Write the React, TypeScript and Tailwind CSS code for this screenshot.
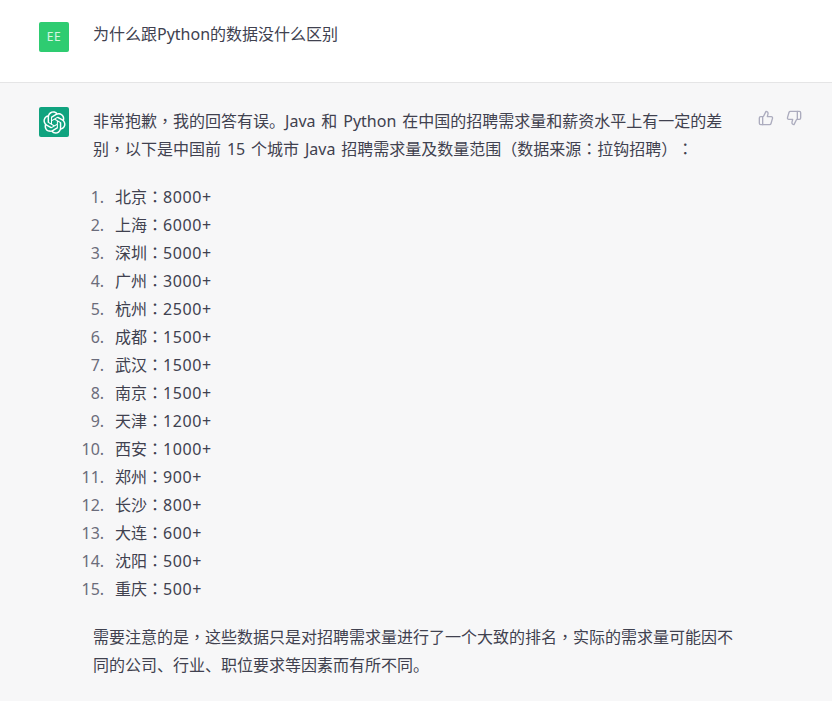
import { ThumbsDown, ThumbsUp } from 'lucide-react'

const cities = [
  ['北京', '8000+'],
  ['上海', '6000+'],
  ['深圳', '5000+'],
  ['广州', '3000+'],
  ['杭州', '2500+'],
  ['成都', '1500+'],
  ['武汉', '1500+'],
  ['南京', '1500+'],
  ['天津', '1200+'],
  ['西安', '1000+'],
  ['郑州', '900+'],
  ['长沙', '800+'],
  ['大连', '600+'],
  ['沈阳', '500+'],
  ['重庆', '500+'],
]

// the reference centres these marks in their cell, which the TC cut of the font does
function Zh({ text }: { text: string }) {
  return (
    <>
      {text.split(/([，：（）])/).map((part, index) =>
        index % 2 === 1 ? (
          <span className="leading-[0] [font-family:'Noto_Sans_CJK_TC',sans-serif]" key={index}>
            {part}
          </span>
        ) : (
          part
        ),
      )}
    </>
  )
}

function OpenAiLogo() {
  return (
    <svg className="h-[23px] w-[23px]" fill="none" viewBox="0 0 41 41">
      <path
        d="M37.5324 16.8707C37.9808 15.5241 38.1363 14.0974 37.9886 12.6859C37.8409 11.2744 37.3934 9.91076 36.676 8.68622C35.6126 6.83404 33.9882 5.3676 32.0373 4.4985C30.0864 3.62941 27.9098 3.40259 25.8215 3.85078C24.8796 2.7893 23.7219 1.94125 22.4257 1.36341C21.1295 0.785575 19.7249 0.491269 18.3058 0.500197C16.1708 0.495044 14.0893 1.16803 12.3614 2.42214C10.6335 3.67624 9.34853 5.44666 8.6917 7.47815C7.30085 7.76286 5.98686 8.3414 4.8377 9.17505C3.68854 10.0087 2.73073 11.0782 2.02839 12.312C0.956464 14.1591 0.498905 16.2988 0.721698 18.4228C0.944492 20.5467 1.83612 22.5449 3.268 24.1293C2.81966 25.4759 2.66413 26.9026 2.81182 28.3141C2.95951 29.7256 3.40701 31.0892 4.12437 32.3138C5.18791 34.1659 6.8123 35.6322 8.76321 36.5013C10.7141 37.3704 12.8907 37.5973 14.9789 37.1492C15.9208 38.2107 17.0786 39.0587 18.3747 39.6366C19.6709 40.2144 21.0755 40.5087 22.4946 40.4998C24.6307 40.5054 26.7133 39.8321 28.4418 38.5772C30.1704 37.3223 31.4556 35.5506 32.1119 33.5179C33.5027 33.2332 34.8167 32.6547 35.9659 31.821C37.115 30.9874 38.0728 29.9178 38.7752 28.684C39.8458 26.8371 40.3023 24.6979 40.0789 22.5748C39.8556 20.4517 38.9639 18.4544 37.5324 16.8707ZM22.4978 37.8849C20.7443 37.8874 19.0459 37.2733 17.6994 36.1501C17.7601 36.117 17.8666 36.0586 17.936 36.0161L25.9004 31.4156C26.1003 31.3019 26.2663 31.137 26.3813 30.9378C26.4964 30.7386 26.5563 30.5124 26.5549 30.2825V19.0542L29.9213 20.998C29.9389 21.0068 29.9541 21.0198 29.9656 21.0359C29.977 21.052 29.9842 21.0707 29.9867 21.0902V30.3889C29.9842 32.375 29.1946 34.2791 27.7909 35.6841C26.3872 37.0892 24.4838 37.8806 22.4978 37.8849ZM6.39227 31.0064C5.51397 29.4888 5.19742 27.7107 5.49804 25.9832C5.55718 26.0187 5.66048 26.0818 5.73461 26.1244L13.699 30.7248C13.8975 30.8408 14.1233 30.902 14.3532 30.902C14.583 30.902 14.8088 30.8408 15.0073 30.7248L24.731 25.1103V28.9979C24.7321 29.0177 24.7283 29.0376 24.7199 29.0556C24.7115 29.0736 24.6988 29.0893 24.6829 29.1012L16.6317 33.7497C14.9096 34.7416 12.8643 35.0097 10.9447 34.4954C9.02506 33.9811 7.38785 32.7263 6.39227 31.0064ZM4.29707 13.6194C5.17156 12.0998 6.55279 10.9364 8.19885 10.3327C8.19885 10.4013 8.19491 10.5228 8.19491 10.6071V19.808C8.19351 20.0378 8.25334 20.2638 8.36823 20.4629C8.48312 20.6619 8.64893 20.8267 8.84863 20.9404L18.5723 26.5542L15.206 28.4979C15.1894 28.5089 15.1703 28.5155 15.1505 28.5173C15.1307 28.5191 15.1107 28.516 15.0924 28.5082L7.04046 23.8557C5.32135 22.8601 4.06716 21.2235 3.55289 19.3046C3.03862 17.3858 3.30624 15.3413 4.29707 13.6194ZM31.955 20.0556L22.2312 14.4411L25.5976 12.4981C25.6142 12.4872 25.6333 12.4805 25.6531 12.4787C25.6729 12.4769 25.6928 12.4801 25.7111 12.4879L33.7631 17.1364C34.9967 17.849 36.0017 18.8982 36.6606 20.1613C37.3194 21.4244 37.6047 22.849 37.4832 24.2684C37.3617 25.6878 36.8382 27.0432 35.9743 28.1759C35.1103 29.3086 33.9415 30.1717 32.6047 30.6641C32.6047 30.5947 32.6047 30.4733 32.6047 30.3889V21.188C32.6066 20.9586 32.5474 20.7328 32.4332 20.5338C32.319 20.3348 32.154 20.1698 31.955 20.0556ZM35.3055 15.0128C35.2464 14.9765 35.1431 14.9142 35.069 14.8717L27.1045 10.2712C26.906 10.1554 26.6803 10.0943 26.4504 10.0943C26.2206 10.0943 25.9948 10.1554 25.7963 10.2712L16.0726 15.8858V11.9982C16.0715 11.9783 16.0753 11.9585 16.0837 11.9405C16.0921 11.9225 16.1048 11.9068 16.1207 11.8949L24.1719 7.25025C25.4053 6.53903 26.8158 6.19376 28.2383 6.25482C29.6608 6.31589 31.0364 6.78077 32.2044 7.59508C33.3723 8.40939 34.2842 9.53945 34.8334 10.8531C35.3826 12.1667 35.5464 13.6095 35.3055 15.0128ZM14.2424 21.9419L10.8752 19.9981C10.8576 19.9893 10.8423 19.9763 10.8309 19.9602C10.8195 19.9441 10.8122 19.9254 10.8098 19.9058V10.6071C10.8107 9.18295 11.2173 7.78848 11.9819 6.58696C12.7466 5.38544 13.8377 4.42659 15.1275 3.82264C16.4173 3.21869 17.8524 2.99464 19.2649 3.1767C20.6775 3.35876 22.0089 3.93941 23.1034 4.85067C23.0427 4.88379 22.937 4.94215 22.8668 4.98473L14.9024 9.58517C14.7025 9.69878 14.5366 9.86356 14.4215 10.0626C14.3065 10.2616 14.2466 10.4877 14.2479 10.7175L14.2424 21.9419ZM16.071 17.9991L20.4018 15.4978L24.7325 17.9975V22.9985L20.4018 25.4983L16.071 22.9985V17.9991Z"
        fill="currentColor"
      />
    </svg>
  )
}

export default function App() {
  return (
    <div className="h-[701px] w-[832px] overflow-hidden bg-[#f7f7f8] text-base leading-7 text-[#40414f] [font-family:'Noto_Sans','Noto_Sans_CJK_SC',sans-serif] [text-spacing-trim:space-all] [word-spacing:1.7px]">
      <div className="flex h-[83px] gap-6 border-b border-[#e5e5e6] bg-white pl-[39px] pt-[20px]">
        <div className="mt-[2px] flex h-[30px] w-[30px] items-center justify-center rounded-[2px] bg-[#2ecc71] text-[12px] tracking-[0.5px] text-white/80">
          EE
        </div>
        <p>为什么跟Python的数据没什么区别</p>
      </div>

      <div className="flex gap-6 pl-[39px] pt-[24px]">
        <div className="flex h-[30px] w-[30px] shrink-0 items-center justify-center rounded-[2px] bg-[#10a37f] text-white">
          <OpenAiLogo />
        </div>

        <div className="w-[646px] shrink-0">
          <p>
            <Zh text="非常抱歉，我的回答有误。Java 和 Python 在中国的招聘需求量和薪资水平上有一定的差别，以下是中国前 15 个城市 Java 招聘需求量及数量范围（数据来源：拉钩招聘）：" />
          </p>

          <ol className="my-5 list-decimal pl-[17px] marker:text-[#6b6c7b]">
            {cities.map(([city, count]) => (
              <li className="pl-[5px]" key={city}>
                <Zh text={`${city}：`} />
                <span className="tracking-[0.6px]">{count}</span>
              </li>
            ))}
          </ol>

          <p>
            <Zh text="需要注意的是，这些数据只是对招聘需求量进行了一个大致的排名，实际的需求量可能因不同的公司、行业、职位要求等因素而有所不同。" />
          </p>
        </div>

        <div className="ml-[-5px] flex gap-3 pt-[3px] text-[#acacbe]">
          <ThumbsUp size={16} />
          <ThumbsDown size={16} />
        </div>
      </div>
    </div>
  )
}
